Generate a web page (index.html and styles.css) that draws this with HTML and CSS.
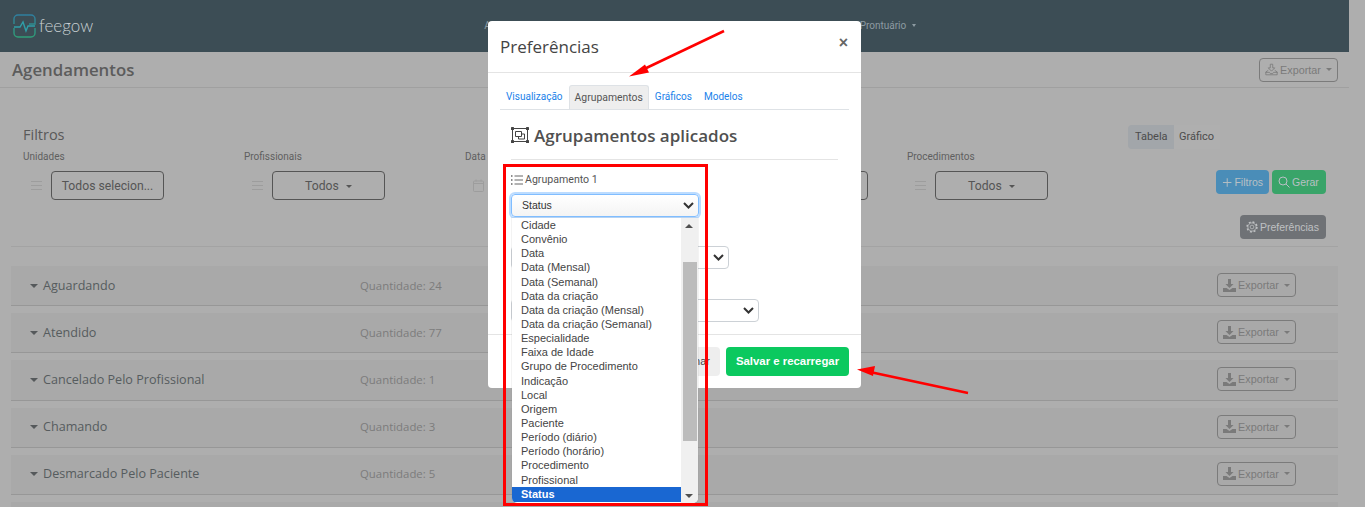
FILE: index.html
```html
<!DOCTYPE html>
<html lang="pt-BR">
<head>
<meta charset="utf-8">
<title>Agendamentos</title>
<link rel="stylesheet" href="styles.css">
</head>
<body>
<nav class="nav">
  <div class="logo">
    <svg class="logo-icon" width="23" height="24" viewBox="0 0 23 24" fill="none"><defs><linearGradient id="lg" x1="0" y1="0" x2="0" y2="1"><stop offset="0" stop-color="#2f7f9f"/><stop offset="1" stop-color="#2f9f78"/></linearGradient></defs><path d="M1 10V5a4 4 0 0 1 4-4h13a4 4 0 0 1 4 4v5h-6M1 14v5a4 4 0 0 0 4 4h13a4 4 0 0 0 4-4v-5" stroke="url(#lg)" stroke-width="1.4"/><path d="M1 13h6l3-5 3 9 2-5h7" stroke="#2f9fa8" stroke-width="1.4"/></svg>
    <span class="logo-text">feegow</span>
  </div>
  <span class="nav-a">A</span>
  <span class="nav-item">Prontuário <i class="caret small"></i></span>
</nav>

<main class="page">
  <header class="title-bar">
    <h1>Agendamentos</h1>
    <button class="btn-outline"><svg class="ic" width="13" height="13" viewBox="0 0 16 16" fill="none" stroke="currentColor"><path d="M6.500 1.500h3V6H12L8 10 4 6h2.500zM4 9 1 11v3.500h14V11l-3-2M1 11.500h4.500l1 1.500h3l1-1.500H15"/></svg> Exportar <i class="caret"></i></button>
  </header>

  <section class="filters">
    <div class="filter-head">
      <h2>Filtros</h2>
      <div class="tabs-toggle"><span class="on">Tabela</span><span>Gráfico</span></div>
    </div>
    <div class="filter-row">
      <div class="filter"><label>Unidades</label><div class="ctrl"><i class="burger"></i><button class="select-btn">Todos selecion...</button></div></div>
      <div class="filter"><label>Profissionais</label><div class="ctrl"><i class="burger"></i><button class="select-btn">Todos <i class="caret"></i></button></div></div>
      <div class="filter"><label>Data</label><div class="ctrl"><svg class="cal" width="11" height="13" viewBox="0 0 11 13" fill="none" stroke="#9d9d9d"><rect x=".5" y="2" width="10" height="10.500" rx="1"/><path d="M.5 4.500h10M3 .5v2M8 .5v2"/></svg></div></div>
      <div class="filter"><label>Status</label><div class="ctrl"><i class="burger"></i><button class="select-btn wide">Todos <i class="caret"></i></button></div></div>
      <div class="filter"><label>Procedimentos</label><div class="ctrl"><i class="burger"></i><button class="select-btn">Todos <i class="caret"></i></button></div></div>
      <div class="actions">
        <button class="btn btn-blue"><svg width="11" height="11" viewBox="0 0 11 11" stroke="currentColor" fill="none"><path d="M5.500 1v9M1 5.500h9"/></svg> Filtros</button>
        <button class="btn btn-green"><svg width="12" height="12" viewBox="0 0 12 12" stroke="currentColor" fill="none"><circle cx="5" cy="5" r="4"/><path d="m8 8 3.500 3.500"/></svg> Gerar</button>
      </div>
    </div>
    <div class="pref-row">
      <button class="btn btn-gray"><svg width="12" height="12" viewBox="0 0 16 16" stroke="currentColor" fill="none"><circle cx="8" cy="8" r="2.500"/><circle cx="8" cy="8" r="5.500"/><circle cx="8" cy="8" r="6.500" stroke-width="2.200" stroke-dasharray="2.550 2.550"/></svg> Preferências</button>
    </div>
  </section>

  <section class="groups">
    <article class="group"><span class="group-name"><i class="caret big"></i>Aguardando</span><span class="qty">Quantidade: 24</span><button class="btn-outline sm"><svg class="ic" width="13" height="13" viewBox="0 0 13 13" fill="currentColor"><path d="M5 0h3v5h2.500L6.500 9 2.500 5H5zM0 9h3.500l3 2 3-2H13v4H0z"/></svg> Exportar <i class="caret"></i></button></article>
    <article class="group"><span class="group-name"><i class="caret big"></i>Atendido</span><span class="qty">Quantidade: 77</span><button class="btn-outline sm"><svg class="ic" width="13" height="13" viewBox="0 0 13 13" fill="currentColor"><path d="M5 0h3v5h2.500L6.500 9 2.500 5H5zM0 9h3.500l3 2 3-2H13v4H0z"/></svg> Exportar <i class="caret"></i></button></article>
    <article class="group"><span class="group-name"><i class="caret big"></i>Cancelado Pelo Profissional</span><span class="qty">Quantidade: 1</span><button class="btn-outline sm"><svg class="ic" width="13" height="13" viewBox="0 0 13 13" fill="currentColor"><path d="M5 0h3v5h2.500L6.500 9 2.500 5H5zM0 9h3.500l3 2 3-2H13v4H0z"/></svg> Exportar <i class="caret"></i></button></article>
    <article class="group"><span class="group-name"><i class="caret big"></i>Chamando</span><span class="qty">Quantidade: 3</span><button class="btn-outline sm"><svg class="ic" width="13" height="13" viewBox="0 0 13 13" fill="currentColor"><path d="M5 0h3v5h2.500L6.500 9 2.500 5H5zM0 9h3.500l3 2 3-2H13v4H0z"/></svg> Exportar <i class="caret"></i></button></article>
    <article class="group"><span class="group-name"><i class="caret big"></i>Desmarcado Pelo Paciente</span><span class="qty">Quantidade: 5</span><button class="btn-outline sm"><svg class="ic" width="13" height="13" viewBox="0 0 13 13" fill="currentColor"><path d="M5 0h3v5h2.500L6.500 9 2.500 5H5zM0 9h3.500l3 2 3-2H13v4H0z"/></svg> Exportar <i class="caret"></i></button></article>
    <article class="group"></article>
  </section>
</main>

<div class="modal">
  <div class="modal-header"><h3>Preferências</h3><span class="close">×</span></div>
  <ul class="tabs">
    <li>Visualização</li><li class="active">Agrupamentos</li><li>Gráficos</li><li>Modelos</li>
  </ul>
  <div class="modal-body">
    <h4><svg width="18" height="16" viewBox="0 0 18 16" fill="none" stroke="#444"><rect x="1.500" y="1.500" width="15" height="13"/><path d="M4.500 4.500h6v5h-6zM7.500 9.500v2.500h6v-5h-3" /><g fill="#444" stroke="none"><rect width="3" height="3" rx=".6"/><rect x="15" width="3" height="3" rx=".6"/><rect y="13" width="3" height="3" rx=".6"/><rect x="15" y="13" width="3" height="3" rx=".6"/></g></svg> Agrupamentos aplicados</h4>
    <div class="field-label"><svg width="12" height="10" viewBox="0 0 12 10" fill="none" stroke="#666"><path d="M3.500 1H12M3.500 5H12M3.500 9H12"/><path d="M0 1h1.500M0 5h1.500M0 9h1.500" stroke-width="1.600"/></svg> Agrupamento 1</div>
    <div class="fake-select focus"><span>Status</span><svg width="11" height="7" viewBox="0 0 11 7" fill="none" stroke="#333" stroke-width="2"><path d="m1 1 4.500 4.500L10 1"/></svg></div>
    <div class="fake-select second"><svg width="11" height="7" viewBox="0 0 11 7" fill="none" stroke="#333" stroke-width="2"><path d="m1 1 4.500 4.500L10 1"/></svg></div>
    <div class="fake-select third"><svg width="11" height="7" viewBox="0 0 11 7" fill="none" stroke="#333" stroke-width="2"><path d="m1 1 4.500 4.500L10 1"/></svg></div>
    <div class="dropdown">
      <ul class="options">
        <li>Cidade</li><li>Convênio</li><li>Data</li><li>Data (Mensal)</li><li>Data (Semanal)</li><li>Data da criação</li><li>Data da criação (Mensal)</li><li>Data da criação (Semanal)</li><li>Especialidade</li><li>Faixa de Idade</li><li>Grupo de Procedimento</li><li>Indicação</li><li>Local</li><li>Origem</li><li>Paciente</li><li>Período (diário)</li><li>Período (horário)</li><li>Procedimento</li><li>Profissional</li><li class="selected">Status</li>
      </ul>
      <div class="scrollbar"><i class="up"></i><b class="thumb"></b><i class="down"></i></div>
    </div>
  </div>
  <div class="modal-footer">
    <button class="btn-close">Fechar</button>
    <button class="btn-save">Salvar e recarregar</button>
  </div>
</div>

<div class="red-box"></div>
<svg class="arrows" width="1365" height="507" viewBox="0 0 1365 507"><g stroke="#f00" stroke-width="2.500" fill="#f00"><path d="M724 31 640 71"/><path d="M629 76.500 645 64.500 649 72.500z" stroke="none"/><path d="M968 393 870 372"/><path d="M857 369.500 875 366 873 376z" stroke="none"/></g></svg>
</body>
</html>
```
FILE: styles.css
```css
* { box-sizing: border-box; }
html, body { margin: 0; height: 507px; overflow: hidden; }
body { background: #aeaeae; font-family: "Open Sans", sans-serif; color: #555; position: relative; }
button { font-family: inherit; cursor: pointer; }
h1, h2, h3, h4, ul { margin: 0; padding: 0; font-weight: 400; list-style: none; }
i { font-style: normal; }

.nav { height: 52px; width: 1349px; background: #3c4d55; display: flex; align-items: flex-start; position: relative; }
.logo { display: flex; align-items: center; margin: 14px 0 0 13px; gap: 3px; }
.logo-text { font-family: "Lato", sans-serif; font-weight: 300; font-size: 17px; color: #c9d0d3; line-height: 24px; }
.nav-a { margin: 19px 0 0 391px; font-size: 10px; color: #8d9ba2; font-family: Roboto, sans-serif; line-height: 13px; }
.nav-item { margin: 19px 0 0 369px; font-size: 10px; color: #8d9ba2; font-family: Roboto, sans-serif; line-height: 13px; white-space: nowrap; }

.caret { display: inline-block; width: 0; height: 0; border-left: 3.500px solid transparent; border-right: 3.500px solid transparent; border-top: 3.500px solid currentColor; vertical-align: 2px; margin-left: 3px; }
.caret.small { border-width: 3px 2.500px 0; }
.caret.big { border-left-width: 4.500px; border-right-width: 4.500px; border-top-width: 4.500px; margin: 0 5px 0 0; color: #55595b; }

.page { width: 1349px; height: 455px; overflow: hidden; }
.title-bar { height: 36px; border-bottom: 1px solid #a0a0a0; padding: 0 11px 0 12px; display: flex; justify-content: space-between; align-items: center; }
h1 { font-size: 16.800px; font-weight: 600; color: #5c5c5c; line-height: 36px; }
.btn-outline { height: 24px; width: 79px; padding: 0; border: 1px solid #7b7b7b; border-radius: 4px; background: transparent; color: #7a7a7a; font-family: "Liberation Sans", sans-serif; font-size: 10.800px; display: flex; align-items: center; justify-content: center; gap: 2px; white-space: nowrap; }
.btn-outline .caret { margin-left: 3px; }
.ic { flex: none; }

.filters { margin: 37px 11px 0; border-bottom: 1px solid #a3a3a3; padding: 0 0 7px 12px; }
.filter-head { display: flex; justify-content: space-between; align-items: flex-start; width: 1197px; height: 24px; }
h2 { font-size: 14.500px; font-weight: 500; color: #595959; line-height: 20px; }
.tabs-toggle { display: flex; font-family: Roboto, sans-serif; font-size: 11px; line-height: 24px; color: #4c4c4c; }
.tabs-toggle span { padding: 0 5px; width: 46px; background: #afafaf; white-space: nowrap; }
.tabs-toggle .on { background: #a2a6aa; border-radius: 4px 0 0 4px; padding: 0 7px; }

.filter-row { display: flex; position: relative; }
.filter { width: 221px; flex: none; }
.filter label { display: block; font-family: Roboto, sans-serif; font-size: 10px; line-height: 14px; color: #5f5f5f; padding-top: 1px; height: 15px; }
.ctrl { display: flex; align-items: center; margin: 7px 0 0 8px; gap: 9px; height: 29px; }
.burger { width: 11px; height: 9px; flex: none; border-top: 1px solid #9d9d9d; border-bottom: 1px solid #9d9d9d; position: relative; }
.burger::after { content: ""; position: absolute; left: 0; right: 0; top: 3px; border-top: 1px solid #9d9d9d; }
.cal { flex: none; }
.select-btn { width: 113px; height: 29px; padding: 0; background: transparent; border: 1px solid #555; border-radius: 4px; font-family: Roboto, sans-serif; font-size: 12.200px; color: #555; white-space: nowrap; }
.select-btn.wide { width: 154px; }
.select-btn .caret { margin-left: 4px; }
.actions { display: flex; gap: 3px; position: absolute; left: 1193px; top: 21px; }
.btn { height: 24px; padding: 0 6px; border-radius: 4px; border: 0; font-family: "Liberation Sans", sans-serif; font-size: 10.500px; color: #b8c0c4; display: inline-flex; align-items: center; gap: 2px; white-space: nowrap; }
.btn-blue { width: 53px; background: #4a8db8; }
.btn-green { width: 54px; background: #39a469; }
.btn-gray { width: 86px; background: #6f7276; color: #bfc1c3; }
.pref-row { display: flex; justify-content: flex-end; margin: 15px 12px 0 0; }

.groups { margin: 19px 11px 0; }
.group { height: 40.200px; margin-bottom: 7px; background: #a9a9a9; border-bottom: 1px solid #979797; display: flex; align-items: center; padding: 0 42px 1px 19px; font-family: Roboto, sans-serif; }
.group-name { width: 330px; flex: none; font-family: "Open Sans", sans-serif; font-size: 12.600px; color: #565c5e; white-space: nowrap; }
.qty { font-size: 11.400px; color: #7c7c7c; font-family: "Open Sans", sans-serif; }
.btn-outline.sm { margin-left: auto; }

.modal { position: absolute; left: 488px; top: 21px; width: 373px; height: 367px; background: #fff; border-radius: 4px; color: #444; display: flex; flex-direction: column; }
.modal-header { height: 52px; flex: none; padding: 0 12px; border-bottom: 1px solid #e4e4e4; display: flex; justify-content: space-between; align-items: center; }
h3 { font-size: 17px; font-weight: 400; color: #444; }
.close { font-family: "Liberation Sans", sans-serif; font-weight: 700; font-size: 16px; color: #666; margin: -8px 1px 0 0; }
.tabs { display: flex; margin: 12px 12px 0; height: 25px; flex: none; border-bottom: 1px solid #dee2e6; font-family: Roboto, sans-serif; font-size: 10px; line-height: 24px; color: #1a82ea; padding-left: 0; }
.tabs li { padding: 0 6px; white-space: nowrap; }
.tabs .active { background: #eee; color: #555; border: 1px solid #dee2e6; border-bottom: 0; border-radius: 3px 3px 0 0; padding: 0 5px; font-size: 10.400px; }
.modal-body { flex: 1; padding: 0 23px; position: relative; }
h4 { height: 50px; border-bottom: 1px solid #e4e4e4; padding-top: 1px; font-size: 17px; font-weight: 600; color: #505050; display: flex; align-items: center; gap: 5px; white-space: nowrap; width: 327px; }
.field-label { margin-top: 12px; height: 15px; display: flex; align-items: center; gap: 2px; font-family: Roboto, sans-serif; font-size: 10.600px; color: #555; }
.fake-select { height: 23px; border: 1px solid #ccd1d6; border-radius: 4px; display: flex; justify-content: flex-end; align-items: center; padding: 0 4px; background: #fff; font-family: "Liberation Sans", sans-serif; font-size: 10.500px; color: #333; }
.fake-select.focus { margin-top: 7px; width: 188px; justify-content: space-between; padding: 0 4px 0 10px; border-color: #80bdff; box-shadow: 0 0 0 2px #bcdcff; background: linear-gradient(#fff, #f4f4f4); }
.fake-select.focus span { margin-top: -1px; }
.second { width: 218px; margin-top: 29px; }
.third { width: 248px; margin-top: 30px; }
.dropdown { position: absolute; left: 24px; top: 108px; width: 186px; height: 285px; border-radius: 0 0 5px 5px; background: #fff; display: flex; overflow: hidden; box-shadow: 0 0 1px #888; z-index: 2; }
.options { width: 169px; font-family: "Liberation Sans", sans-serif; font-size: 11px; line-height: 14.150px; color: #444; }
.options li { padding-left: 9px; height: 14.150px; white-space: nowrap; }
.options .selected { background: #1967d2; color: #fff; font-weight: 700; height: 15px; }
.scrollbar { width: 17px; background: #f0f0f0; position: relative; }
.thumb { position: absolute; left: 2px; top: 44px; width: 14px; height: 179px; background: #bcbcbc; }
.up, .down { position: absolute; left: 4px; width: 0; height: 0; border-left: 4px solid transparent; border-right: 4px solid transparent; }
.up { top: 6px; border-bottom: 4px solid #505050; }
.down { bottom: 5px; border-top: 4px solid #505050; }
.modal-footer { height: 54px; flex: none; border-top: 1px solid #e4e4e4; display: flex; justify-content: flex-end; align-items: flex-start; gap: 6px; padding: 12px 12px 0; }
.btn-close { width: 66px; height: 29px; border: 0; border-radius: 4px; background: #eee; color: #444; font-size: 11px; font-family: "Liberation Sans", sans-serif; text-align: right; padding: 0 10px 2px 0; }
.btn-save { width: 123px; height: 29px; border: 0; border-radius: 4px; background: #0bc95f; color: #fff; font-family: "Liberation Sans", sans-serif; font-weight: 700; font-size: 11.400px; padding: 0 0 2px; }

.red-box { position: absolute; left: 503px; top: 164px; width: 205px; height: 342px; border: 3px solid #f00; pointer-events: none; z-index: 3; }
.arrows { position: absolute; left: 0; top: 0; pointer-events: none; z-index: 4; }
```
